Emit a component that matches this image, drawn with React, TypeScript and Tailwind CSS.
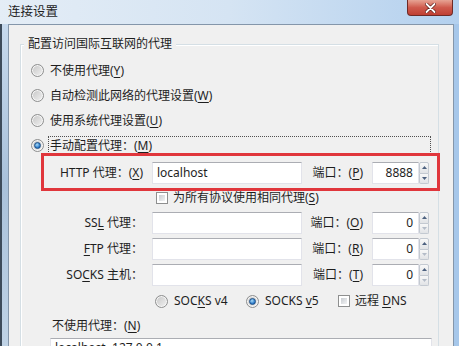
import type { ReactNode } from 'react';

function U({ children }: { children: ReactNode }) {
  return <span className="underline underline-offset-2 decoration-[1px]">{children}</span>;
}

function Radio({ checked }: { checked?: boolean }) {
  return (
    <span className="flex h-[13px] w-[13px] shrink-0 items-center justify-center rounded-full border border-[#8e8f8f] bg-gradient-to-br from-[#c6c6c6] to-[#f2f2f2] shadow-[inset_0_0_0_1px_#f6f6f6]">
      {checked && (
        <span className="h-[7px] w-[7px] rounded-full border border-[#1c4f86] bg-[radial-gradient(circle_at_40%_35%,#a8dcf8,#2a78c8_65%,#1a5a9e)]" />
      )}
    </span>
  );
}

function Check() {
  return (
    <span className="h-[12px] w-[12px] shrink-0 border border-[#8e8f8f] bg-white p-[2px]">
      <span className="block h-full w-full bg-gradient-to-br from-[#c9cdd2] to-[#f2f3f4]" />
    </span>
  );
}

function Spinner({ dimDown }: { dimDown?: boolean }) {
  return (
    <div className="flex h-[22px] w-[10px] shrink-0 flex-col">
      <div className="flex flex-1 items-center justify-center rounded-t-[2px] border border-[#c3c9d1] bg-gradient-to-b from-[#f8f8f8] to-[#e1e3e6]">
        <svg width="5" height="3" viewBox="0 0 5 3">
          <path d="M0 3 L2.5 0 L5 3Z" fill="#4c607f" />
        </svg>
      </div>
      <div className="flex flex-1 items-center justify-center rounded-b-[2px] border border-t-0 border-[#c3c9d1] bg-gradient-to-b from-[#f8f8f8] to-[#e1e3e6]">
        <svg width="5" height="3" viewBox="0 0 5 3">
          <path d="M0 0 L2.5 3 L5 0Z" fill={dimDown ? '#b4bcc8' : '#4c607f'} />
        </svg>
      </div>
    </div>
  );
}

function TextBox({ value, className = '' }: { value?: string; className?: string }) {
  return (
    <div
      className={`flex h-[22px] items-center border border-[#e2e3ea] border-t-[#abadb3] bg-white ${className}`}
    >
      {value}
    </div>
  );
}

interface ProxyRowProps {
  label: ReactNode;
  portLabel: ReactNode;
  host?: string;
  port: string;
}

function ProxyRow({ label, portLabel, host, port }: ProxyRowProps) {
  return (
    <div className="flex h-[26px] items-center">
      <div className="w-[122px] text-right">{label}</div>
      <TextBox value={host} className="ml-[9px] w-[150px] pl-[4px]" />
      <div className="w-[61px] text-right">{portLabel}</div>
      <TextBox value={port} className="ml-[9px] w-[47px] justify-end pr-[5px]" />
      <Spinner dimDown={port === '0'} />
    </div>
  );
}

export default function App() {
  return (
    <div className="relative h-[346px] w-[459px] overflow-hidden bg-[#b7d0ea] font-['Segoe_UI','Noto_Sans','Noto_Sans_CJK_SC',sans-serif] text-[12px] leading-4 text-[#1e1e1e]">
      {/* title bar */}
      <div className="flex h-[24px] items-center bg-gradient-to-r from-[#e4edf6] via-[#d5e4f3] to-[#b3d0ee] pl-[8px] text-[12.5px]">
        连接设置
      </div>
      <div className="absolute left-[407px] top-0 flex h-[16px] w-[46px] items-center justify-center rounded-b-[4px] border border-t-0 border-[#6e2a26] bg-gradient-to-b from-[#e6a394] via-[#cf5a4d] to-[#bf3f33]">
        <svg width="11" height="10" viewBox="0 0 11 10">
          <path d="M1.5 1 L9.5 9 M9.5 1 L1.5 9" stroke="#5a1a16" strokeWidth="3.2" strokeLinecap="round" />
          <path d="M1.5 1 L9.5 9 M9.5 1 L1.5 9" stroke="#ffffff" strokeWidth="1.8" strokeLinecap="round" />
        </svg>
      </div>

      <div className="flex h-[322px]">
        <div className="w-[8px] border-l-2 border-[#3d4b5a] bg-gradient-to-b from-[#c6d9ed] via-[#a9c1da] to-[#c0d3e6]" />

        <div className="w-[446px] border border-b-0 border-[#8496aa] bg-[#f0f0f0] pl-[11px] pt-[19px]">
          {/* group box */}
          <div className="relative h-[320px] w-[419px] border border-[#d5dfe5] pt-[13px] shadow-[inset_1px_1px_0_#ffffff]">
            <span className="absolute left-[3px] top-[-9px] bg-[#f0f0f0] px-[4px]">配置访问国际互联网的代理</span>

            <div className="flex h-[25px] items-center gap-[6px] pl-[10px]">
              <Radio />
              <span>
                不使用代理(<U>Y</U>)
              </span>
            </div>
            <div className="flex h-[25px] items-center gap-[6px] pl-[10px]">
              <Radio />
              <span>
                自动检测此网络的代理设置(<U>W</U>)
              </span>
            </div>
            <div className="flex h-[25px] items-center gap-[6px] pl-[10px]">
              <Radio />
              <span>
                使用系统代理设置(<U>U</U>)
              </span>
            </div>
            <div className="mr-[7px] flex h-[25px] items-center gap-[4px] pl-[10px]">
              <Radio checked />
              <span className="flex h-[20px] flex-1 items-center border border-dotted border-[#505050] pl-[1px]">
                手动配置代理：(<U>M</U>)
              </span>
            </div>

            <div className="mt-[2px]">
              <ProxyRow
                label={
                  <>
                    HTTP 代理：(<U>X</U>)
                  </>
                }
                portLabel={
                  <>
                    端口：(<U>P</U>)
                  </>
                }
                host="localhost"
                port="8888"
              />

              <div className="flex h-[24px] items-center gap-[5px] pl-[135px]">
                <Check />
                <span>
                  为所有协议使用相同代理(<U>S</U>)
                </span>
              </div>

              <ProxyRow
                label={
                  <>
                    SS<U>L</U> 代理：
                  </>
                }
                portLabel={
                  <>
                    端口：(<U>O</U>)
                  </>
                }
                port="0"
              />
              <ProxyRow
                label={
                  <>
                    <U>F</U>TP 代理：
                  </>
                }
                portLabel={
                  <>
                    端口：(<U>R</U>)
                  </>
                }
                port="0"
              />
              <ProxyRow
                label={
                  <>
                    SO<U>C</U>KS 主机：
                  </>
                }
                portLabel={
                  <>
                    端口：(<U>T</U>)
                  </>
                }
                port="0"
              />

              <div className="flex h-[26px] items-center pl-[134px]">
                <div className="flex w-[91px] items-center gap-[6px]">
                  <Radio />
                  <span>
                    SOC<U>K</U>S v4
                  </span>
                </div>
                <div className="flex w-[92px] items-center gap-[6px]">
                  <Radio checked />
                  <span>
                    SOCKS <U>v</U>5
                  </span>
                </div>
                <div className="flex items-center gap-[5px]">
                  <Check />
                  <span>
                    远程 <U>D</U>NS
                  </span>
                </div>
              </div>

              <div className="flex h-[24px] items-center pl-[31px]">
                <span>
                  不使用代理：(<U>N</U>)
                </span>
              </div>
              <div className="ml-[29px] h-[40px] w-[382px] border border-[#e2e3ea] border-t-[#abadb3] bg-white pl-[4px] pt-[1px]">
                localhost, 127.0.0.1
              </div>
            </div>
          </div>
        </div>

        <div className="w-[5px] bg-[#a6c7ea]" />
      </div>

      {/* red annotation box */}
      <div className="absolute left-[41px] top-[153px] h-[38px] w-[399px] border-[3px] border-[#e0363c]" />
    </div>
  );
}
